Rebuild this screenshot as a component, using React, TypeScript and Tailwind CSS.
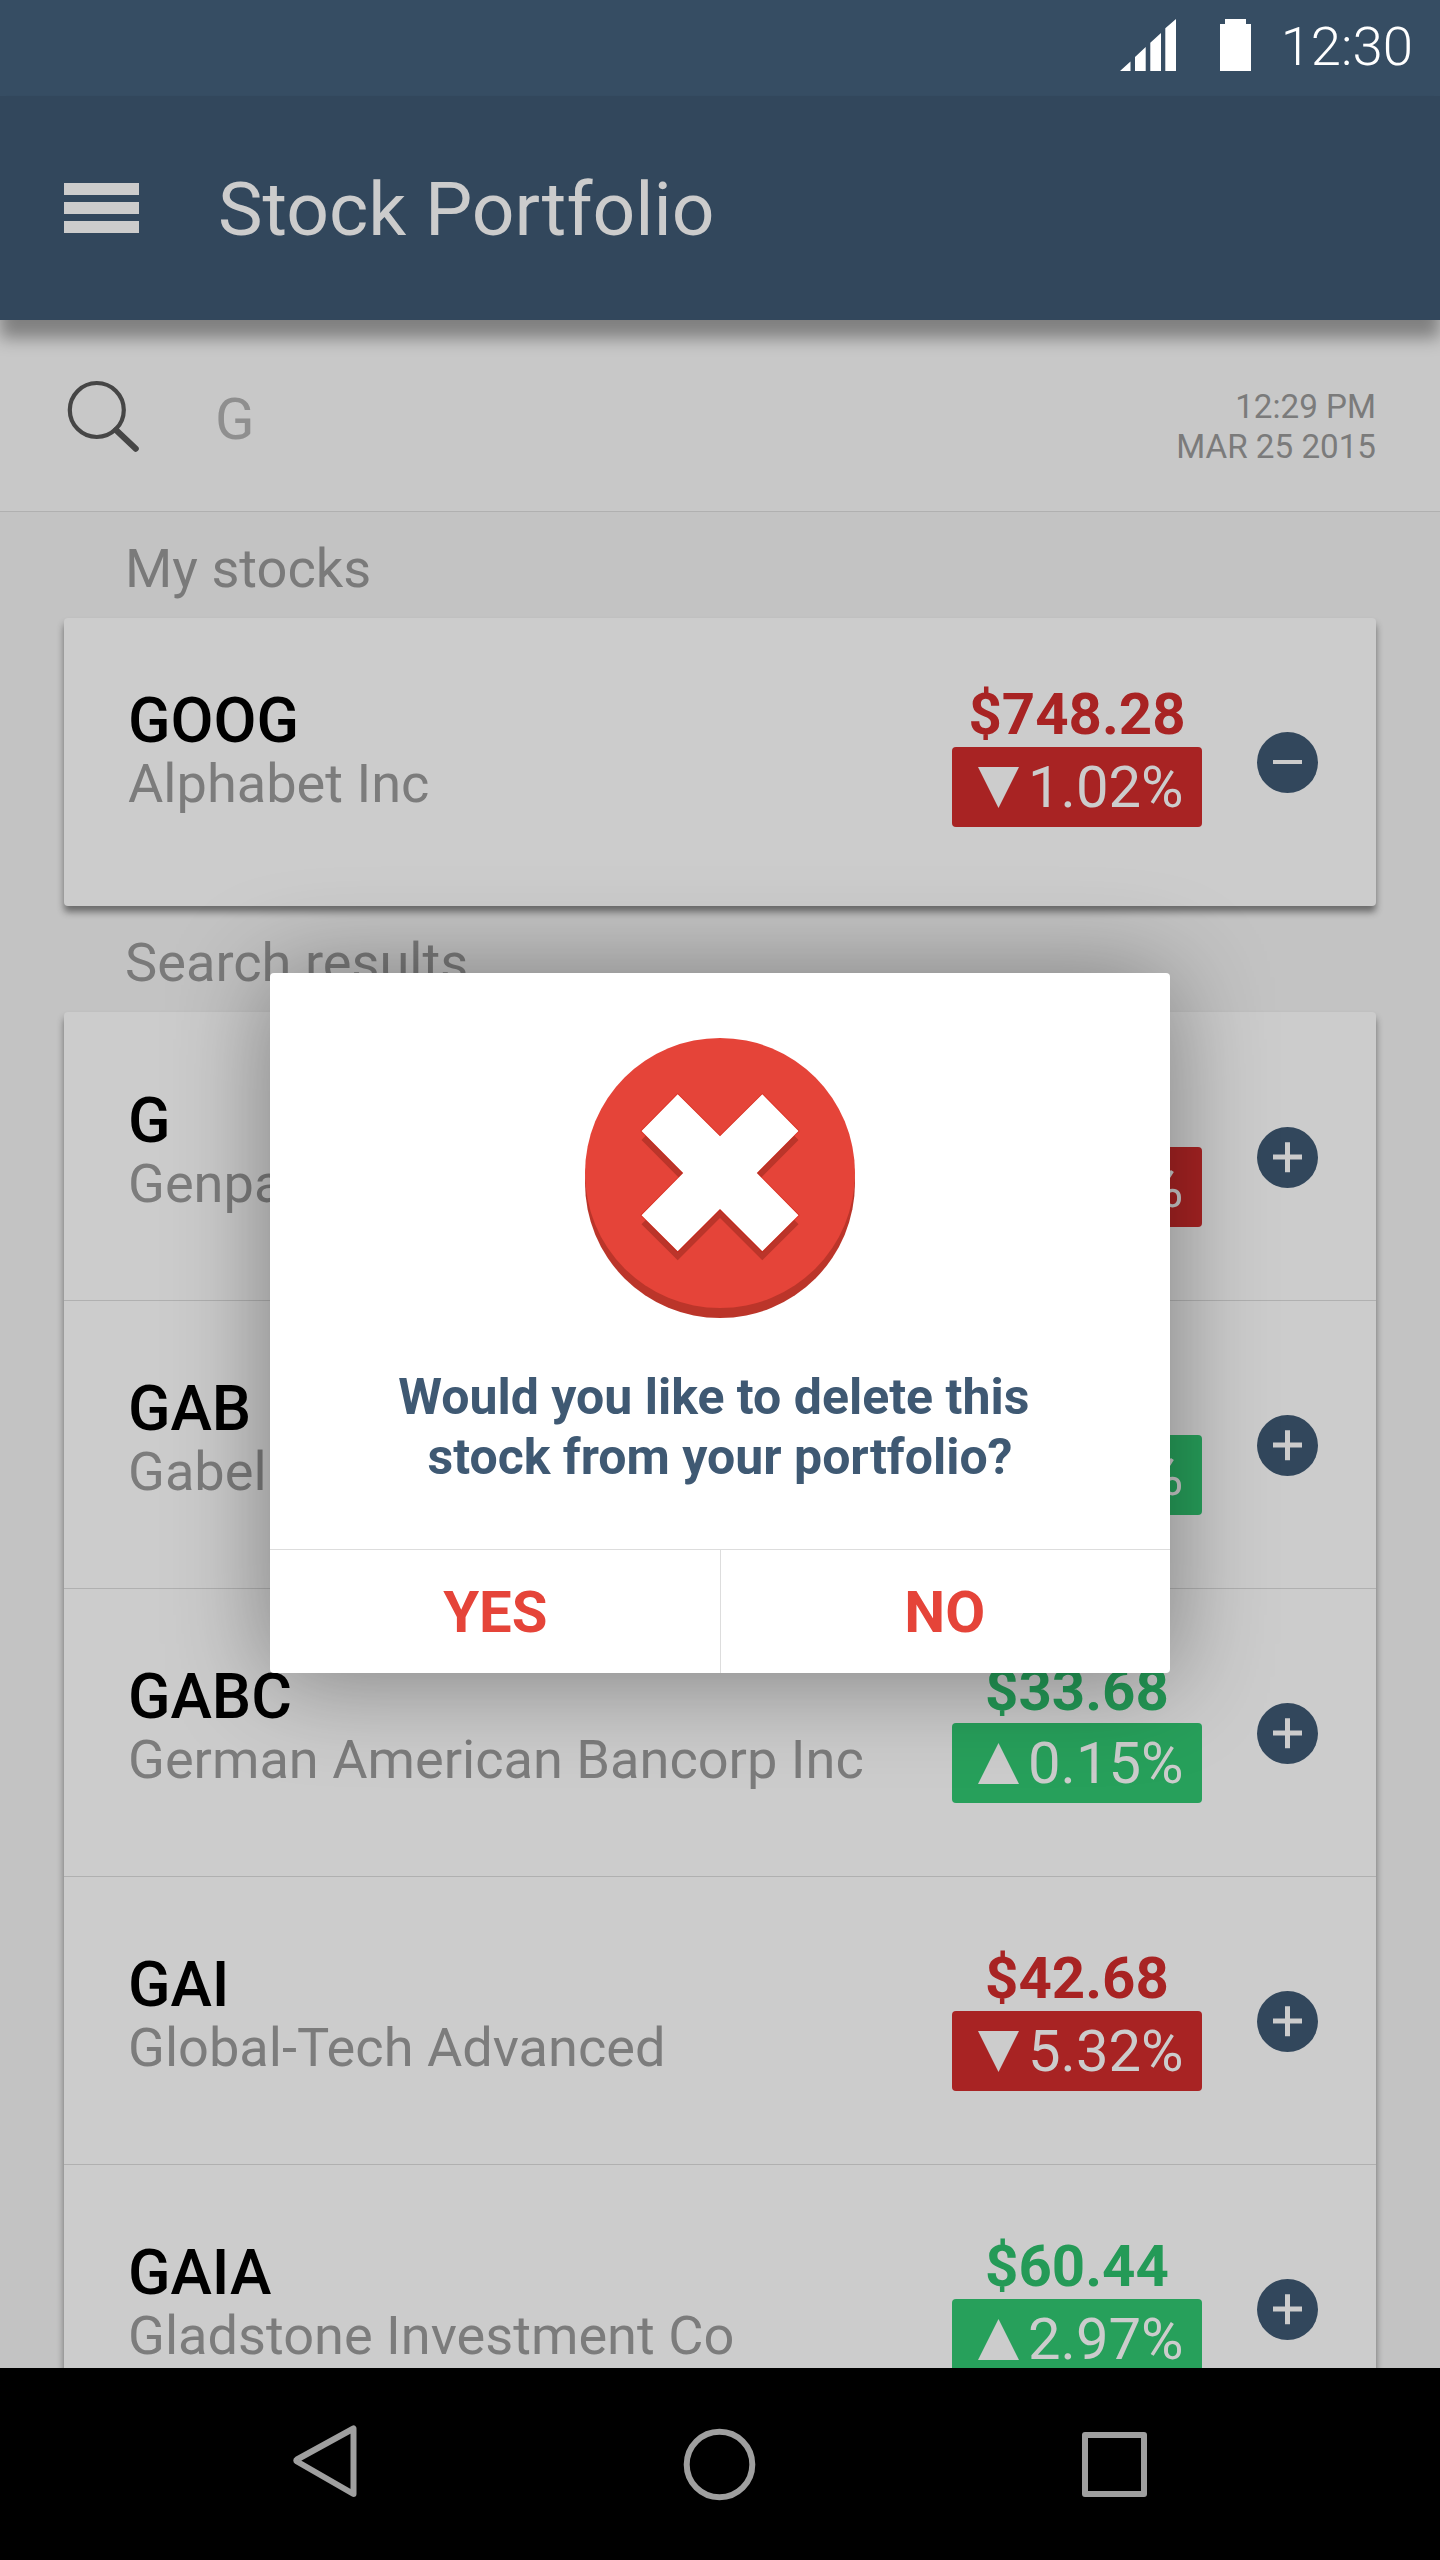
type Stock = {
  symbol: string;
  company: string;
  price: string;
  change: string;
  up: boolean;
};

const owned: Stock = { symbol: 'GOOG', company: 'Alphabet Inc', price: '$748.28', change: '1.02%', up: false };

const results: Stock[] = [
  { symbol: 'G', company: 'Genpact Ltd', price: '$27.35', change: '0.62%', up: false },
  { symbol: 'GAB', company: 'Gabelli Equity', price: '$5.41', change: '0.37%', up: true },
  { symbol: 'GABC', company: 'German American Bancorp Inc', price: '$33.68', change: '0.15%', up: true },
  { symbol: 'GAI', company: 'Global-Tech Advanced', price: '$42.68', change: '5.32%', up: false },
  { symbol: 'GAIA', company: 'Gladstone Investment Co', price: '$60.44', change: '2.97%', up: true },
];

const CROSS =
  'M92.7 56.3L135 98.3L177.3 56.3L213.5 93L171.8 135L213.5 177.3L177.3 213.3L135 171L92.7 213.3L56.5 177.3L98.2 135L56.5 93z';

function StatusBar() {
  return (
    <div className="flex h-24 items-start justify-end bg-[#364d63] pr-[27px] text-white">
      <svg className="mt-[19px] mr-11 h-[52px] w-14" viewBox="0 0 56 52" fill="currentColor">
        <path d="M0 52L10.5 42.5V52zM15 38L25.7 28V52H15zM30.3 23.7L41 14V52H30.3zM45.3 9.3L56 0V52H45.3z" />
      </svg>
      <svg className="mt-[19px] mr-[30px] h-[52px] w-[31px]" viewBox="0 0 31 52" fill="currentColor">
        <path d="M5 0H26V5H31V52H0V5H5z" />
      </svg>
      <span className="mt-[17px] text-[54.5px] leading-[58px] font-light">12:30</span>
    </div>
  );
}

function AppBar() {
  return (
    <header className="relative z-10 flex h-56 items-center bg-[#32475c] px-16 shadow-[0_18px_16px_0px_rgba(0,0,0,0.36)]">
      <button className="flex w-[75px] flex-col gap-[7.5px]" aria-label="Menu">
        <span className="h-[11.5px] bg-[#cccccc]" />
        <span className="h-[11.5px] bg-[#cccccc]" />
        <span className="h-[11.5px] bg-[#cccccc]" />
      </button>
      <h1 className="mt-[2px] ml-[79px] text-[75px] leading-none text-[#cccccc]">Stock Portfolio</h1>
    </header>
  );
}

function SearchBar() {
  return (
    <div className="flex h-48 items-start border-b border-[#b0b0b0] bg-[#c8c8c8] pr-16 pl-[66px]">
      <svg className="mt-[60px] h-[73px] w-[75px]" viewBox="0 0 75 73" fill="none" stroke="#464646">
        <circle cx="30.8" cy="30" r="27" strokeWidth="4.2" />
        <path d="M50 50L69.8 68.8" strokeWidth="6" strokeLinecap="round" />
      </svg>
      <span className="mt-[69px] ml-[74px] text-[58px] leading-[60px] text-[#8f8f8f]">G</span>
      <div className="mt-[67px] ml-auto text-right text-[33.2px] leading-[40px] text-[#7b7b7b]">
        <div>12:29 PM</div>
        <div>MAR 25 2015</div>
      </div>
    </div>
  );
}

function Arrow({ up }: { up: boolean }) {
  return (
    <svg className="h-[41px] w-[41px]" viewBox="0 0 41 41" fill="currentColor">
      <path d={up ? 'M20.5 0L41 41H0z' : 'M0 0H41L20.5 41z'} />
    </svg>
  );
}

function StockRow({ stock, held = false }: { stock: Stock; held?: boolean }) {
  return (
    <div className="flex h-[288px] pl-16">
      <div className={held ? 'mt-[72px]' : 'mt-[78px]'}>
        <div className="text-[62.4px] leading-[62px] font-medium text-black">{stock.symbol}</div>
        <div className="mt-[1px] text-[54.15px] leading-[62px] whitespace-nowrap text-[#7c7c7c]">{stock.company}</div>
      </div>
      <div className={held ? 'mt-[64px] ml-auto w-[250px]' : 'mt-[70px] ml-auto w-[250px]'}>
        <div
          className={
            stock.up
              ? 'mb-px text-center text-[58.2px] leading-[64px] font-bold text-[#249a57]'
              : 'mb-px text-center text-[58.2px] leading-[64px] font-bold text-[#a82323]'
          }
        >
          {stock.price}
        </div>
        <div
          className={
            stock.up
              ? 'flex h-20 items-center rounded-[4px] bg-[#27a05b] pl-[26px] text-[#cccccc]'
              : 'flex h-20 items-center rounded-[4px] bg-[#a82323] pl-[26px] text-[#cccccc]'
          }
        >
          <Arrow up={stock.up} />
          <span className="ml-[9px] text-[58px] leading-[80px]">{stock.change}</span>
        </div>
      </div>
      <button
        className={held ? 'mt-[114px] mr-[58px] ml-[55px] h-[61px]' : 'mt-[115px] mr-[58px] ml-[55px] h-[61px]'}
        aria-label={held ? 'Remove' : 'Add'}
      >
        <svg className="h-[61px] w-[61px]" viewBox="0 0 61 61" stroke="#cccccc" strokeWidth={held ? 4 : 5}>
          <circle cx="30.5" cy="30.5" r="30.5" fill="#32475c" stroke="none" />
          <path d={held ? 'M16 30H45' : 'M16 30H45M30.5 15.3V45.3'} />
        </svg>
      </button>
    </div>
  );
}

function SectionTitle({ children }: { children: string }) {
  return (
    <h2 className="flex h-[106px] items-center pt-[8px] pl-[125px] text-[54.2px] leading-none text-[#7a7a7a]">
      {children}
    </h2>
  );
}

function DeleteDialog() {
  return (
    <div className="absolute top-[973px] left-[270px] z-20 flex h-[700px] w-[900px] flex-col rounded-[4px] bg-white shadow-[0_4px_100px_rgba(0,0,0,0.39)]">
      <div className="flex h-[576px] flex-col items-center pt-[65px]">
        <svg className="h-[280px] w-[270px]" viewBox="0 0 270 280">
          <circle cx="135" cy="145" r="135" fill="#bb352a" />
          <circle cx="135" cy="135" r="135" fill="#e54439" />
          <path transform="translate(0 9)" fill="#bb352a" d={CROSS} />
          <path fill="#ffffff" stroke="#d01508" strokeOpacity="0.55" strokeWidth="1.6" paintOrder="stroke" d={CROSS} />
        </svg>
        <p className="mt-[49px] text-center text-[50px] leading-[60px] font-bold whitespace-pre text-[#3f5973]">
          {'Would you like to delete this \nstock from your portfolio?'}
        </p>
      </div>
      <div className="flex h-[124px] border-t border-[#dddddd] text-[58px] font-bold text-[#e54439]">
        <button className="flex-1 pt-[2px] pl-[1px]">YES</button>
        <button className="flex-1 border-l border-[#dddddd] pt-[2px] pr-[1px]">NO</button>
      </div>
    </div>
  );
}

function NavBar() {
  return (
    <nav className="relative z-30 flex h-48 items-start bg-black pl-[292px]">
      <svg className="mt-[56px] h-[74px] w-[66px]" viewBox="0 0 66 74" fill="none" stroke="#9f9f9f" strokeWidth="6" strokeLinejoin="round">
        <path d="M61.5 4.5V70L5 37.5Q3.5 36.5 5 35.5z" />
      </svg>
      <svg className="mt-[60px] ml-[325px] h-[73px] w-[73px]" viewBox="0 0 73 73" fill="none" stroke="#9f9f9f" strokeWidth="6">
        <circle cx="36.5" cy="36.5" r="32.8" />
      </svg>
      <span className="mt-[64px] ml-[326px] h-[65px] w-[65px] rounded-[3px] border-[6px] border-[#9f9f9f]" />
    </nav>
  );
}

export default function App() {
  return (
    <div className="relative flex h-[2560px] w-[1440px] flex-col overflow-hidden bg-[#c3c3c3] font-[Roboto,sans-serif]">
      <StatusBar />
      <AppBar />
      <SearchBar />
      <main className="min-h-0 flex-1 overflow-hidden">
        <SectionTitle>My stocks</SectionTitle>
        <section className="mx-16 rounded-[4px] bg-[#cccccc] shadow-[0_6px_7px_rgba(0,0,0,0.45)]">
          <StockRow stock={owned} held />
        </section>
        <SectionTitle>Search results</SectionTitle>
        <section className="mx-16 rounded-[4px] bg-[#cccccc] shadow-[0_6px_7px_rgba(0,0,0,0.45)]">
          {results.map((stock, i) => (
            <div key={stock.symbol} className={i > 0 ? 'h-[288px] shadow-[inset_0_1px_0_#b0b0b0]' : 'h-[288px]'}>
              <StockRow stock={stock} />
            </div>
          ))}
        </section>
      </main>
      <NavBar />
      <DeleteDialog />
    </div>
  );
}
